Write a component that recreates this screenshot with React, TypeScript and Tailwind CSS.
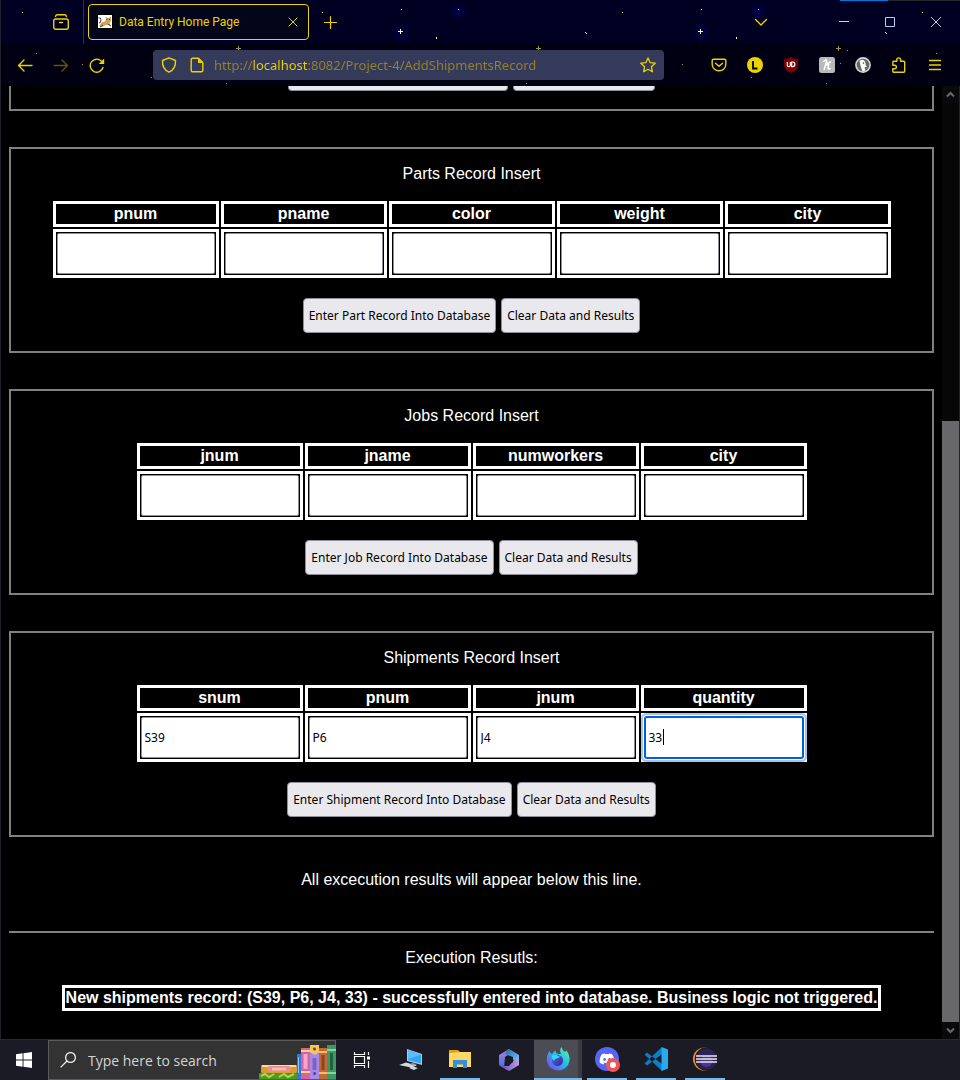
import React from "react";
import { FaDiscord } from "react-icons/fa";

type Field = { name: string; value?: string; focused?: boolean };

const tahoma = "font-['Noto_Sans','DejaVu_Sans',sans-serif] text-[12px]";
const segoe = "font-['Noto_Sans','Open_Sans',sans-serif]";

function FormButton({ children }: { children: React.ReactNode }) {
  return (
    <button
      type="button"
      className={`h-[35px] shrink-0 whitespace-nowrap rounded-[4px] border border-[#8f8f9d] bg-[#e9e9ed] px-[5px] text-black ${tahoma}`}
    >
      {children}
    </button>
  );
}

function RecordSection({ id, title, fields, action }: { id: string; title: string; fields: Field[]; action: string }) {
  return (
    <form className="mt-9 flex flex-col items-center border-2 border-[#808080] py-4">
      <p className="mb-4">{title}</p>
      <table className="border-separate border-spacing-[2px]">
        <thead>
          <tr>
            {fields.map((f) => (
              <th key={f.name} id={`${id}-${f.name}`} className="border-[3px] border-white p-px font-bold">
                {f.name}
              </th>
            ))}
          </tr>
        </thead>
        <tbody>
          <tr>
            {fields.map((f) => (
              <td key={f.name} className="relative border-[3px] border-white p-px">
                <input
                  type="text"
                  aria-labelledby={`${id}-${f.name}`}
                  defaultValue={f.value}
                  className={`block h-[41px] w-[158px] rounded-[2px] bg-white px-[3px] text-black outline-none ${tahoma} ${
                    f.focused
                      ? "border border-[#0060df] shadow-[0_0_0_1px_#0060df,0_0_0_2px_#ffffff,0_0_0_4px_#a9c3ea]"
                      : "border border-[#8f8f9d]"
                  }`}
                />
                {f.focused && <span className="absolute left-[19px] top-[13px] h-4 w-px bg-black" />}
              </td>
            ))}
          </tr>
        </tbody>
      </table>
      <div className="mb-[2px] mt-[18px] flex gap-[5px]">
        <FormButton>{action}</FormButton>
        <FormButton>Clear Data and Results</FormButton>
      </div>
    </form>
  );
}

function Stars() {
  return (
    <svg className="absolute inset-0 h-full w-full" shapeRendering="crispEdges" aria-hidden="true">
      <defs>
        <pattern id="stars" width="300" height="86" patternUnits="userSpaceOnUse">
          <g fill="#00003c" shapeRendering="auto">
            <circle cx="101" cy="32" r="7" />
            <circle cx="158" cy="11" r="7" />
          </g>
          <g fill="#ffff8c">
            <path d="M98 31h5v1h-5zM100 29h1v5h-1zM22 12h1v1h-1zM136 37h1v2h-1zM285 32h1v1h-1zM286 33h1v1h-1zM158 9h1v1h-1zM101 9h1v1h-1z" />
          </g>
          <g fill="#9a9448">
            <path d="M236 48h5v1h-5zM238 46h1v5h-1zM36 53h1v1h-1zM247 50h1v1h-1zM82 64h1v1h-1zM240 63h1v1h-1zM151 77h1v1h-1zM226 83h1v1h-1z" />
          </g>
        </pattern>
      </defs>
      <rect width="100%" height="44" fill="#000022" />
      <rect y="44" width="100%" height="42" fill="#000012" />
      <rect width="100%" height="86" fill="url(#stars)" />
    </svg>
  );
}

const line = { fill: "none", stroke: "#ebd300", strokeWidth: 1.4, strokeLinecap: "round" as const, strokeLinejoin: "round" as const };

function Glyph({ children, size = 16 }: { children: React.ReactNode; size?: number }) {
  return (
    <svg width={size} height={size} viewBox={`0 0 ${size} ${size}`} aria-hidden="true" className="shrink-0">
      {children}
    </svg>
  );
}

function ToolButton({ label, children }: { label: string; children: React.ReactNode }) {
  return (
    <button type="button" aria-label={label} className="flex h-9 w-9 shrink-0 items-center justify-center">
      {children}
    </button>
  );
}

function TabStrip() {
  return (
    <div className="relative flex h-11 items-center">
      <button type="button" aria-label="Recent browsing" className="ml-[51px] flex h-9 w-5 items-center justify-center">
        <Glyph>
          <g {...line}>
            <rect x=".7" y="5" width="14.6" height="10.3" rx="2" />
            <path d="M2.500 2.500Q3 .8 4.200.8H11.800Q13 .8 13.500 2.500M6.500 8.500h3" />
          </g>
        </Glyph>
      </button>
      <span className="ml-3 mr-1 h-11 w-px bg-[#30304a]" />
      <div className="flex h-9 w-[221px] items-center rounded-[4px] border border-[#ebd300] bg-[#030618] pl-2 pr-[7px] text-[#ebd300]">
        <Glyph>
          <rect width="16" height="16" fill="#000" />
          <rect x="1" y="1" width="14" height="13" fill="#fff" />
          <path d="M2 12L5 8 7 8 9 6 8.500 2.500 10.500 4 12 4 14 2.500 14 7 12.500 9 14 12.500 11 11 9 11 5 13z" fill="#d0a35c" />
          <path d="M1.500 4Q4 3 4 6T2 9M9.500 5.500h1M12 5.500h1M6 11l-3 2M11 10l3 2" stroke="#444" fill="none" />
        </Glyph>
        <span className="ml-[6px] flex-1 whitespace-nowrap font-['Roboto','Open_Sans',sans-serif] text-[12px]">Data Entry Home Page</span>
        <button type="button" aria-label="Close tab" className="flex h-4 w-4 items-center justify-center">
          <Glyph>
            <path d="M4 4l8 8M12 4l-8 8" {...line} strokeWidth={1} />
          </Glyph>
        </button>
      </div>
      <button type="button" aria-label="New tab" className="ml-[14px] flex h-4 w-4 items-center justify-center">
        <Glyph>
          <path d="M7.500 2.500v12M1.500 8.500h12" {...line} strokeWidth={1.200} />
        </Glyph>
      </button>
      <button type="button" aria-label="List all tabs" className="ml-auto mr-[52px] flex h-9 w-4 items-center justify-center">
        <Glyph>
          <path d="M2.500 5.500L8 11l5.500-5.500" {...line} />
        </Glyph>
      </button>
      <div className="mr-px flex">
        <button type="button" aria-label="Minimize" className="flex h-9 w-[46px] items-center justify-center">
          <Glyph>
            <path d="M3 7.500h10" stroke="#c3cbf5" />
          </Glyph>
        </button>
        <button type="button" aria-label="Maximize" className="flex h-9 w-[46px] items-center justify-center">
          <Glyph>
            <path d="M3.500 3.500h9v9h-9z" stroke="#c3cbf5" fill="none" />
          </Glyph>
        </button>
        <button type="button" aria-label="Close" className="flex h-9 w-[46px] items-center justify-center">
          <Glyph>
            <path d="M3 3l10 10M13 3L3 13" stroke="#c3cbf5" />
          </Glyph>
        </button>
      </div>
    </div>
  );
}

function Toolbar() {
  return (
    <div className="relative flex h-[42px] items-center px-[7px]">
      <ToolButton label="Back">
        <Glyph>
          <path d="M15 8.500H1.500M7 3L1.500 8.500 7 14" {...line} />
        </Glyph>
      </ToolButton>
      <ToolButton label="Forward">
        <Glyph>
          <path d="M1 8.500h13.500M9 3L14.500 8.500 9 14" {...line} stroke="#5f5609" />
        </Glyph>
      </ToolButton>
      <ToolButton label="Reload">
        <Glyph>
          <path d="M14 10.500A6.500 6.500 0 1 1 12.300 4" {...line} />
          <path d="M15.200 1.500v5.500H9.700z" fill="#ebd300" />
        </Glyph>
      </ToolButton>
      <div className="ml-[38px] mr-[37px] flex h-[30px] min-w-0 flex-1 items-center rounded-[4px] bg-[#363a5a] px-2">
        <Glyph>
          <path d="M8 .9L14.500 3.500C14.800 8.800 12.500 13.200 8 15.200 3.500 13.200 1.200 8.800 1.500 3.500z" {...line} />
        </Glyph>
        <span className="ml-3 flex">
          <Glyph>
            <path d="M9.500 1.200H3.500A1.300 1.300 0 0 0 2.200 2.500v11a1.300 1.300 0 0 0 1.300 1.300h9a1.300 1.300 0 0 0 1.300-1.300V5.500z" {...line} />
            <path d="M9 1v5h5.200z" fill="#ebd300" />
          </Glyph>
        </span>
        <input
          type="text"
          aria-label="Address"
          defaultValue="http://localhost:8082/Project-4/AddShipmentsRecord"
          className={`ml-[9px] h-7 min-w-0 flex-1 bg-[linear-gradient(90deg,#8f852c_0px,#8f852c_39px,#ebd300_39px,#ebd300_94px,#8f852c_94px)] bg-clip-text text-[13px] text-transparent outline-none ${segoe}`}
        />
        <button type="button" aria-label="Bookmark this page" className="flex h-7 w-4 items-center justify-center">
          <Glyph>
            <path d="M8 .9l2.100 4.700 5.100.6-3.800 3.500 1 5.100L8 12.300l-4.400 2.500 1-5.100L.8 6.200l5.100-.6z" {...line} strokeWidth={1.300} />
          </Glyph>
        </button>
      </div>
      <ToolButton label="Save to Pocket">
        <Glyph>
          <path d="M2.500 2.200h11a1.300 1.300 0 0 1 1.300 1.300v4A6.800 6.300 0 0 1 1.200 7.500v-4a1.300 1.300 0 0 1 1.300-1.300zM4.500 6.200L8 9.300l3.500-3.100" {...line} />
        </Glyph>
      </ToolButton>
      <ToolButton label="Account">
        <Glyph>
          <circle cx="8" cy="8" r="8" fill="#ebd300" />
          <path d="M6 4v7.500h4.500" stroke="#000" strokeWidth="1.800" fill="none" />
        </Glyph>
      </ToolButton>
      <ToolButton label="Content blocker">
        <Glyph>
          <path d="M8 0Q11 2 15 2V8Q15 13 8 16 1 13 1 8V2Q5 2 8 0z" fill="#800000" />
          <path d="M4.300 5v3.200a1.500 1.500 0 0 0 3 0V5M8.700 5h1.200a1.900 2.300 0 0 1 0 4.600H8.700z" stroke="#fff" strokeWidth="1.200" fill="none" />
        </Glyph>
      </ToolButton>
      <ToolButton label="Coupons">
        <Glyph>
          <rect width="16" height="16" rx="2.500" fill="#b9b9b9" />
          <path d="M4.500 4.500Q6.500 2.500 7.500 3.200 7.500 5 5.200 12.500M6 9Q8.500 7 9.500 7.500 9.800 8.500 9 11 9 12.800 11 11.500M8 6.500L11.500 5" stroke="#fff" strokeWidth="1.500" fill="none" strokeLinecap="round" />
        </Glyph>
      </ToolButton>
      <ToolButton label="Privacy">
        <Glyph>
          <circle cx="8" cy="8" r="7.900" fill="#d8d8d8" />
          <circle cx="8" cy="8" r="6.300" fill="#666" />
          <path d="M4.500 4Q8 1.500 10 4.500 11 6 10.500 8L12 9.500 9.500 10.500 10.500 13.500 7.500 14.200Q5.500 10 4.500 4z" fill="#fff" />
          <circle cx="8.500" cy="6" r=".8" fill="#333" />
        </Glyph>
      </ToolButton>
      <ToolButton label="Extensions">
        <Glyph>
          <path d="M5.800 4.200V2.800a1.900 1.900 0 0 1 3.800 0v1.400h3.100a1 1 0 0 1 1 1v9a1 1 0 0 1-1 1H2.800a1 1 0 0 1-1-1v-2.400h1.800a1.800 1.800 0 0 0 0-3.600H1.800V5.200a1 1 0 0 1 1-1z" {...line} />
        </Glyph>
      </ToolButton>
      <ToolButton label="Menu">
        <Glyph>
          <path d="M2.500 3.500h11M2.500 8h11M2.500 12.500h11" {...line} strokeWidth={1.300} />
        </Glyph>
      </ToolButton>
    </div>
  );
}

function Task({ label, state, children }: { label: string; state?: "open" | "active"; children: React.ReactNode }) {
  return (
    <button type="button" aria-label={label} className="flex h-10 w-[49px] shrink-0 flex-col items-center">
      <span
        className={`flex flex-1 items-center justify-center ${
          state === "active" ? "w-12 border-r-4 border-[#3a3a43] bg-[#4c4c54] pl-1" : "w-10"
        }`}
      >
        {children}
      </span>
      {state && <span className={`h-[2px] bg-[#76b9ed] ${state === "active" ? "w-12" : "w-10"}`} />}
    </button>
  );
}

function Books() {
  return (
    <svg width="78" height="34" viewBox="0 0 78 34" className="shrink-0 self-end" aria-hidden="true">
      <rect x="2" y="20" width="36" height="8" rx="1" fill="#d9983a" />
      <path d="M3 20h34v2H3z" fill="#ffdc7c" />
      <rect x="8" y="21" width="24" height="6" rx="3" fill="#ee8f86" />
      <path d="M13 24h14" stroke="#f9bdb4" strokeWidth="2.500" />
      <rect y="28" width="38" height="6" rx="1" fill="#4c9a22" />
      <path d="M2 31l4-2 4 3 5-3M20 32l5-3 4 3 6-3" stroke="#b0d941" strokeWidth="2" fill="none" />
      <rect x="38" y="9" width="4" height="25" fill="#2e79db" />
      <path d="M39.500 12v16" stroke="#80c5ff" />
      <rect x="42" y="3" width="9" height="31" fill="#d8609f" />
      <path d="M42 6h9M42 27h9" stroke="#f8d884" strokeWidth="2" />
      <path d="M46.500 9v15" stroke="#f6a4cc" strokeWidth="4" />
      <rect x="51" width="9" height="34" fill="#a78ae6" />
      <path d="M51 0h9v7l-4 3-5-3z" fill="#f7c64c" />
      <path d="M55.500 13v12" stroke="#7c5fc0" strokeWidth="4" />
      <path d="M54 4h3M55.500 2.500v3M54 28.500h3M55.500 27v3" stroke="#5a3e98" strokeWidth="1.500" />
      <rect x="60" y="3" width="8" height="31" fill="#c06a38" />
      <path d="M60 7h8M60 28h8" stroke="#f3bd68" strokeWidth="2" />
      <path d="M64 10v15" stroke="#8c4422" strokeWidth="3" />
      <rect x="68" width="9" height="34" fill="#3c9865" />
      <path d="M68 5h9M68 28h9" stroke="#86d49c" strokeWidth="2" />
      <path d="M72.500 8v17" stroke="#22603f" strokeWidth="3" />
    </svg>
  );
}

function Taskbar() {
  return (
    <footer className="flex h-[41px] items-stretch border-t border-[#292934] bg-[#1b1b25]">
      <button type="button" aria-label="Start" className="flex w-12 shrink-0 items-center justify-center">
        <Glyph>
          <path d="M0 2.300L6.600 1.300V7.500H0zM7.500 1.200L16 0V7.500H7.500zM0 8.500H6.600V14.700L0 13.800zM7.500 8.500H16V16L7.500 14.800z" fill="#fff" />
        </Glyph>
      </button>
      <label className="flex w-[288px] shrink-0 items-center border border-[#5b5b5d] bg-[#333333] pl-[11px]">
        <Glyph>
          <g fill="none" stroke="#ededed" strokeWidth="1.300">
            <circle cx="10.500" cy="5.500" r="4.900" />
            <path d="M7 9L.6 15.400" />
          </g>
        </Glyph>
        <input
          type="text"
          aria-label="Search"
          placeholder="Type here to search"
          className="ml-3 h-8 w-[171px] shrink-0 bg-transparent font-['Open_Sans','Noto_Sans',sans-serif] text-[14px] text-white outline-none placeholder:text-[#d4d4d4]"
        />
        <Books />
      </label>
      <div className="ml-px flex">
        <Task label="Task view">
          <Glyph size={20}>
            <path d="M2.500 2v2.500h10V2M2.500 18v-2.500h10V18M2.500 6.500h10v7h-10zM16.500 2v3M16.500 11v7" stroke="#fff" strokeWidth="1.200" fill="none" />
            <path d="M15 6.500h3v3h-3z" fill="#fff" />
          </Glyph>
        </Task>
        <Task label="Remote desktop">
          <Glyph size={24}>
            <path d="M8 1L23 6V17L8 13z" fill="#b9c5cd" />
            <path d="M9 2.300L22 6.700V15.500L9 12z" fill="#2fa7f2" />
            <path d="M9 2.300L22 6.700 9 11z" fill="#5cbcff" />
            <path d="M0 17L7 14.500 18 17.500 12 19.500zM10 20L14 18.500 19 20 15 22z" fill="#d3dade" />
            <path d="M13 15l5 1-3 1.500-4-1z" fill="#909ba2" />
          </Glyph>
        </Task>
        <Task label="File Explorer" state="open">
          <Glyph size={24}>
            <path d="M1 3h9l2 2h11v15H1z" fill="#e3a008" />
            <path d="M1 6l10-1h12v15H1z" fill="#ffd766" />
            <path d="M5 13h14v8h-4v-3.500h-6V21H5z" fill="#3590d8" />
          </Glyph>
        </Task>
        <Task label="Microsoft 365">
          <Glyph size={24}>
            <defs>
              <linearGradient id="m1" x1="0" y1="0" x2="0" y2="1">
                <stop stopColor="#b779df" />
                <stop offset="1" stopColor="#3a75dc" />
              </linearGradient>
              <linearGradient id="m2" x1="0" y1="0" x2="1" y2="1">
                <stop stopColor="#2963b4" />
                <stop offset="1" stopColor="#74d4f2" />
              </linearGradient>
              <linearGradient id="m3" x1="0" y1="0" x2="1" y2="0">
                <stop stopColor="#5b4ac0" />
                <stop offset="1" stopColor="#bd9ee0" />
              </linearGradient>
            </defs>
            <path d="M12 1L2 7V17L7 20 8 9 15 4z" fill="url(#m1)" />
            <path d="M10 2Q12 1 14 2L22 7V15L16 12V9L8 6z" fill="url(#m2)" />
            <path d="M22 13V17L13 22.500Q12 23 10 22L3 18 12 18 16 13 22 10z" fill="url(#m3)" />
            <path d="M12 8l4 2.200v4L12 16.500l-4-2.300v-4z" fill="#1b1b25" />
          </Glyph>
        </Task>
        <Task label="Firefox" state="active">
          <Glyph size={24}>
            <defs>
              <linearGradient id="fx" x1="1" y1="0" x2="0" y2="1">
                <stop stopColor="#70f79a" />
                <stop offset=".45" stopColor="#20bfe8" />
                <stop offset="1" stopColor="#8c35ef" />
              </linearGradient>
              <linearGradient id="fy" x1="0" y1="0" x2="1" y2="1">
                <stop stopColor="#3a6fe8" />
                <stop offset="1" stopColor="#45208f" />
              </linearGradient>
            </defs>
            <path d="M3.500 4Q4 6 6 7 7 4.500 9.500 3.500 9.500 6 12 7L15 7Q13 3 15.500 0 16 3 19 5 20 5 20 3 24 8 23.500 13.500 22 22.500 12.500 23.500 2.500 23 .8 14 .5 8 3.500 4z" fill="url(#fx)" />
            <circle cx="11.500" cy="13.500" r="5.500" fill="url(#fy)" />
            <path d="M6 8.500Q9 7 12 9L14 9.500Q13.500 11 10.500 11.500 8 12 8 14 5.500 12 6 8.500z" fill="#35d5ee" />
          </Glyph>
        </Task>
        <Task label="Discord" state="open">
          <span className="relative flex h-6 w-6 items-center justify-center rounded-full bg-[#5865f2]">
            <FaDiscord size={16} color="#fff" />
            <span className="absolute -bottom-px -right-px h-[14px] w-[14px] rounded-full border-4 border-[#ee5656] bg-white" />
          </span>
        </Task>
        <Task label="Visual Studio Code" state="open">
          <Glyph size={24}>
            <path d="M18 0v7L3 18.500.500 16.500zM18 24v-7L3 5.500.500 7.500z" fill="#087fc7" />
            <path d="M17.500 0L24 2.500v19L17.500 24z" fill="#29a9f2" />
          </Glyph>
        </Task>
        <Task label="Eclipse" state="open">
          <Glyph size={24}>
            <circle cx="11.500" cy="12" r="11.500" fill="#f7941e" />
            <circle cx="13.500" cy="12" r="11.800" fill="#1b1b25" />
            <circle cx="13.500" cy="12" r="10.500" fill="#2c2255" />
            <circle cx="13.500" cy="14" r="6" fill="#493a87" />
            <path d="M3 9h21M3 12h21M3 15h21" stroke="#e9e6ef" strokeWidth="1.700" />
          </Glyph>
        </Task>
      </div>
    </footer>
  );
}

function ScrollArrow({ up }: { up?: boolean }) {
  return (
    <button type="button" aria-label={up ? "Scroll up" : "Scroll down"} className="flex h-[17px] w-[17px] items-center justify-center bg-[#0a0a0c]">
      <svg width="9" height="7" viewBox="0 0 9 7" aria-hidden="true">
        <path d={up ? "M1 5.500L4.500 2 8 5.500" : "M1 1.500L4.500 5 8 1.500"} fill="none" stroke="#6a6a6c" strokeWidth="2" />
      </svg>
    </button>
  );
}

export default function App() {
  return (
    <div className="flex min-h-screen flex-col bg-black">
      <header className="relative">
        <Stars />
        <span className="absolute left-0 top-0 h-full w-px bg-[#22222e]" />
        <span className="absolute right-[72px] top-0 h-px w-12 bg-[#0078d7]" />
        <span className="absolute right-0 top-0 h-px w-[72px] bg-[#25252a]" />
        <TabStrip />
        <Toolbar />
      </header>
      <div className="flex flex-1 border-x border-[#22222e]">
        <main className="min-w-0 flex-1 px-2 pb-[26px] font-['Liberation_Sans',Arial,sans-serif] text-[16px] leading-[18px] text-white">
          <div className="flex justify-center gap-[5px] border-x-2 border-b-2 border-[#808080] pb-[18px]">
            <button
              type="button"
              aria-label="Enter Supplier Record Into Database"
              className="h-[5px] w-[220px] rounded-b-[4px] border border-t-0 border-[#8f8f9d] bg-[#e9e9ed]"
            />
            <button
              type="button"
              aria-label="Clear Data and Results"
              className="h-[5px] w-[142px] rounded-b-[4px] border border-t-0 border-[#8f8f9d] bg-[#e9e9ed]"
            />
          </div>
          <RecordSection
            id="parts"
            title="Parts Record Insert"
            action="Enter Part Record Into Database"
            fields={[{ name: "pnum" }, { name: "pname" }, { name: "color" }, { name: "weight" }, { name: "city" }]}
          />
          <RecordSection
            id="jobs"
            title="Jobs Record Insert"
            action="Enter Job Record Into Database"
            fields={[{ name: "jnum" }, { name: "jname" }, { name: "numworkers" }, { name: "city" }]}
          />
          <RecordSection
            id="shipments"
            title="Shipments Record Insert"
            action="Enter Shipment Record Into Database"
            fields={[
              { name: "snum", value: "S39" },
              { name: "pnum", value: "P6" },
              { name: "jnum", value: "J4" },
              { name: "quantity", value: "33", focused: true },
            ]}
          />
          <p className="mt-[34px] text-center">All excecution results will appear below this line.</p>
          <hr className="mt-[42px] border-t-2 border-[#808080]" />
          <p className="mt-4 text-center">Execution Resutls:</p>
          <table className="mx-auto mt-4 border-separate border-spacing-[2px]">
            <tbody>
              <tr>
                <th className="border-[3px] border-white p-px font-bold">
                  New shipments record: (S39, P6, J4, 33) - successfully entered into database. Business logic not triggered.
                </th>
              </tr>
            </tbody>
          </table>
        </main>
        <div className="flex w-[17px] shrink-0 flex-col bg-[#070708]">
          <ScrollArrow up />
          <div className="grow-[318]" />
          <div className="grow-[601] bg-[#68686a]" />
          <ScrollArrow />
        </div>
      </div>
      <Taskbar />
    </div>
  );
}
